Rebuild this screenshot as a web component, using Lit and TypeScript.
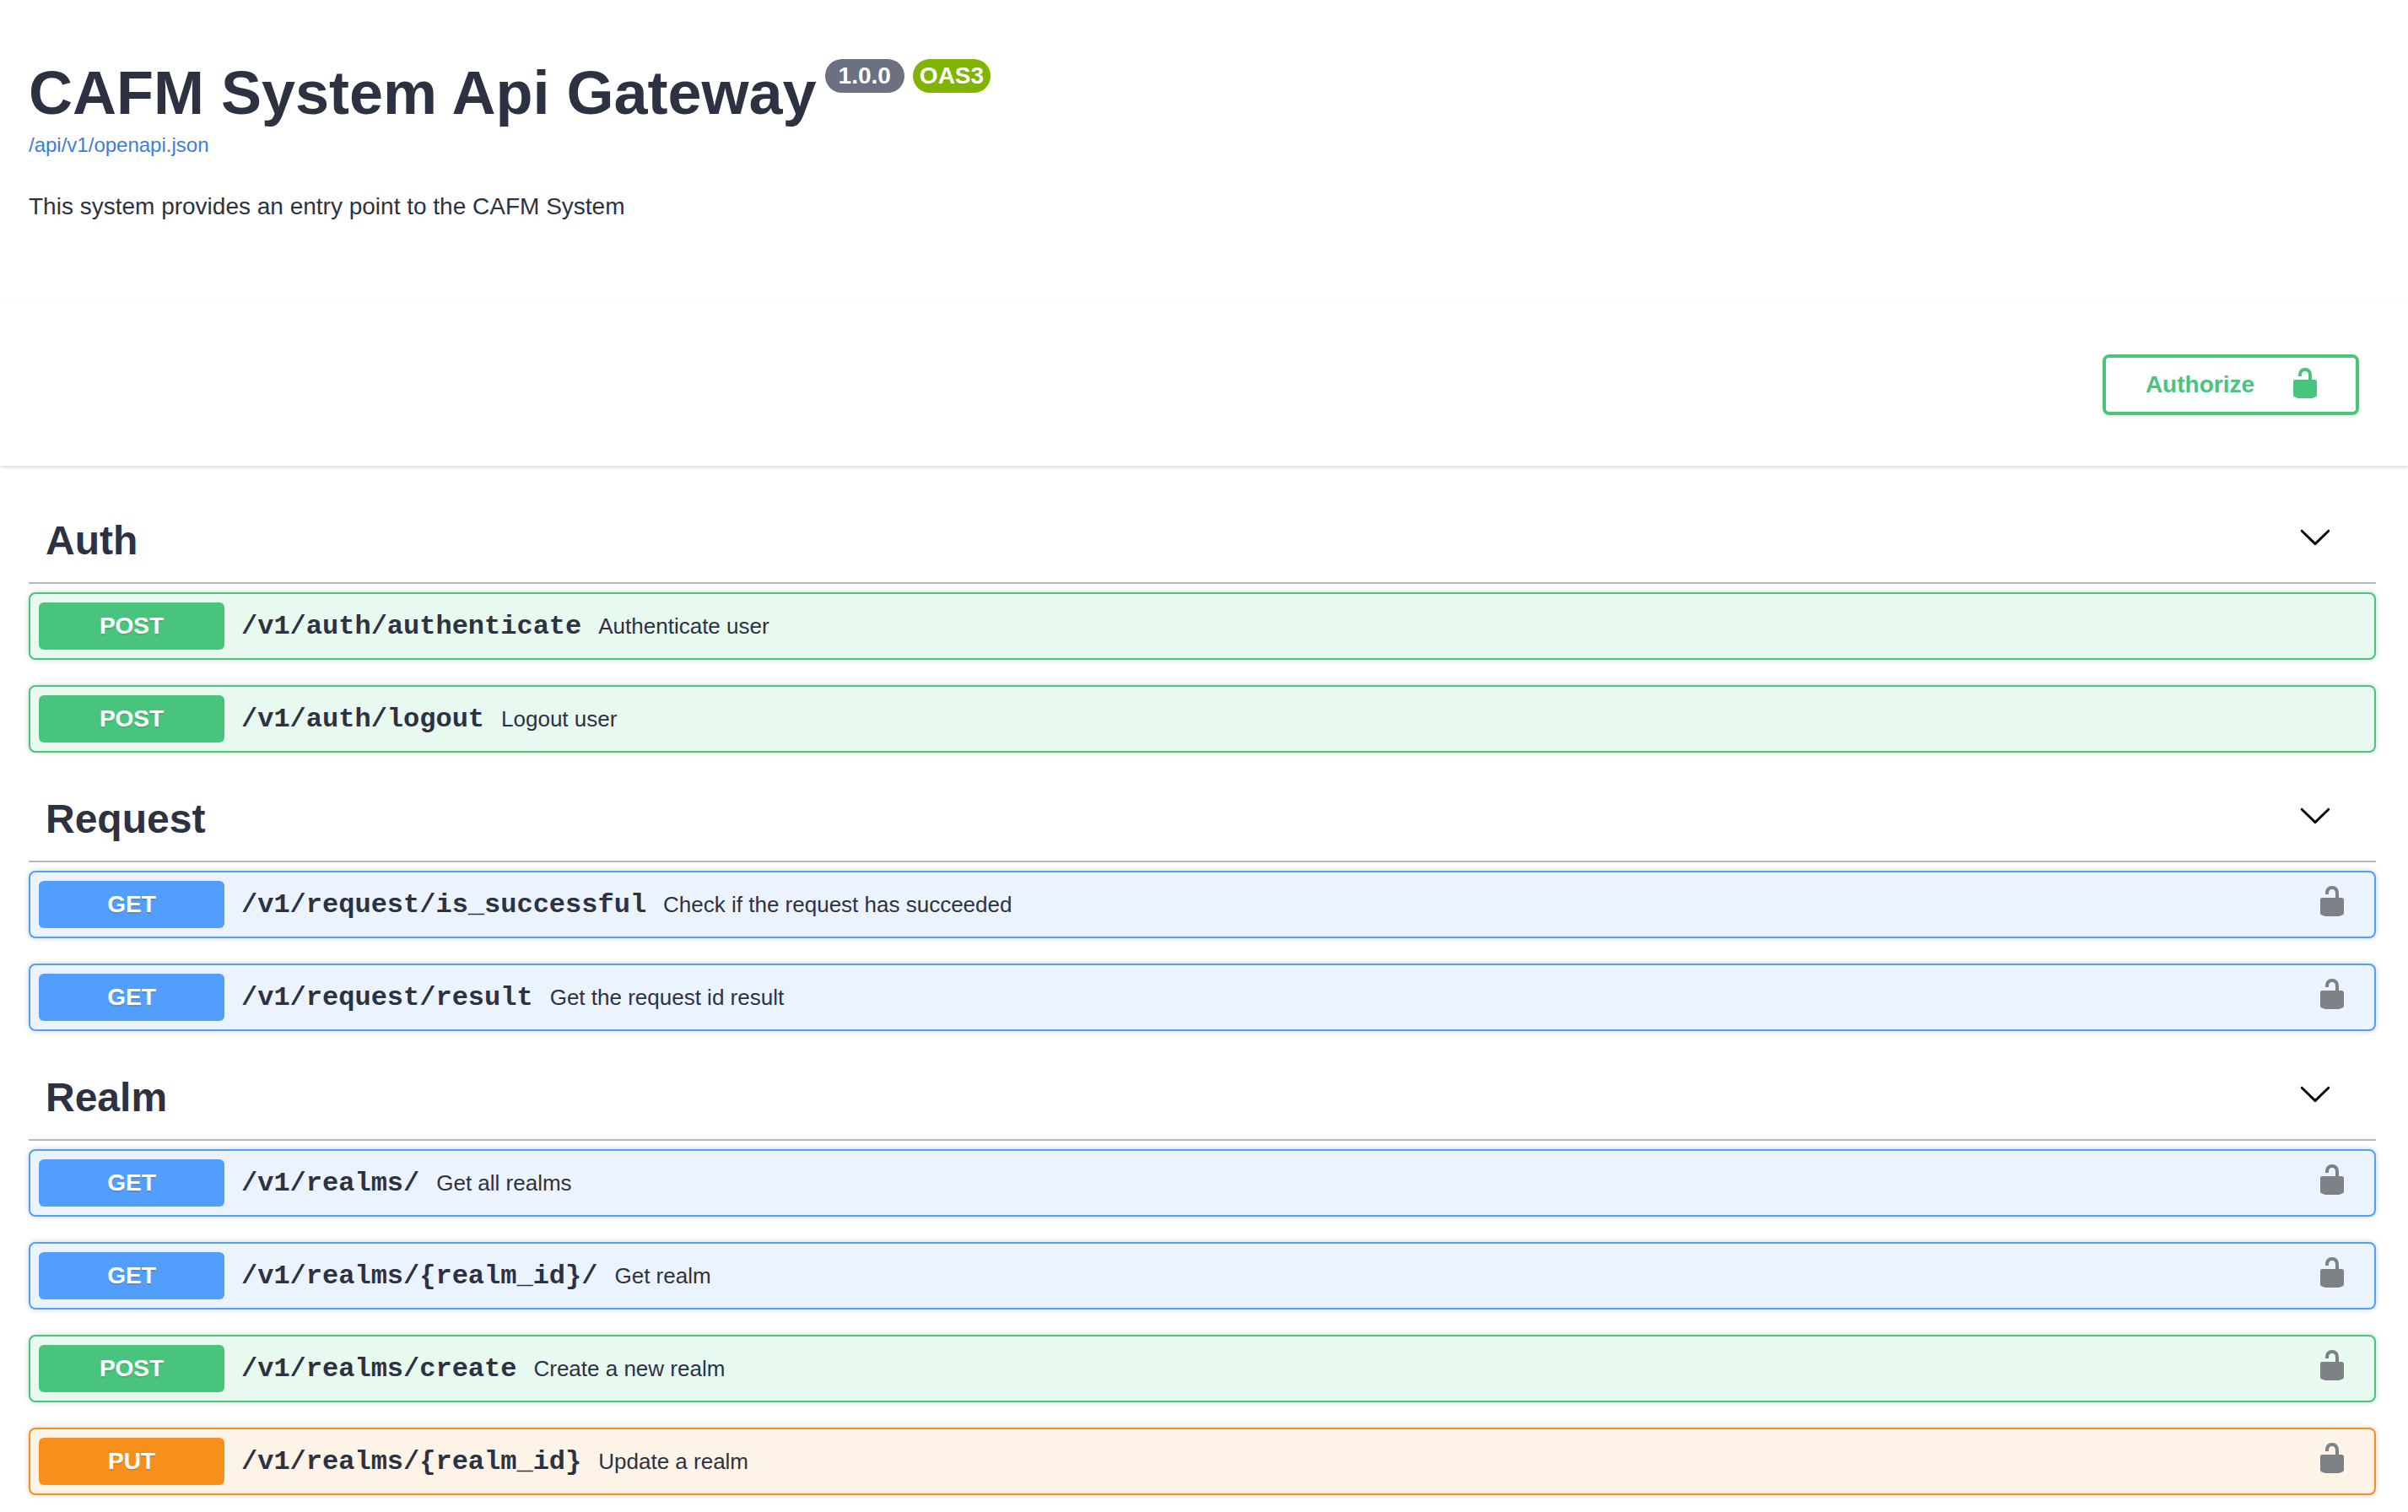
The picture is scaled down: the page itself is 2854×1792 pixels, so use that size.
import { LitElement, html, css, svg, nothing } from "lit";
import { customElement, property } from "lit/decorators.js";

type Method = "get" | "post" | "put";

interface Operation {
  method: Method;
  path: string;
  summary: string;
  secured: boolean;
}

interface Tag {
  name: string;
  operations: Operation[];
}

const tags: Tag[] = [
  {
    name: "Auth",
    operations: [
      { method: "post", path: "/v1/auth/authenticate", summary: "Authenticate user", secured: false },
      { method: "post", path: "/v1/auth/logout", summary: "Logout user", secured: false },
    ],
  },
  {
    name: "Request",
    operations: [
      { method: "get", path: "/v1/request/is_successful", summary: "Check if the request has succeeded", secured: true },
      { method: "get", path: "/v1/request/result", summary: "Get the request id result", secured: true },
    ],
  },
  {
    name: "Realm",
    operations: [
      { method: "get", path: "/v1/realms/", summary: "Get all realms", secured: true },
      { method: "get", path: "/v1/realms/{realm_id}/", summary: "Get realm", secured: true },
      { method: "post", path: "/v1/realms/create", summary: "Create a new realm", secured: true },
      { method: "put", path: "/v1/realms/{realm_id}", summary: "Update a realm", secured: true },
    ],
  },
];

const unlockedPath = svg`<path d="M15.8 8H14V5.6C14 2.703 12.665 1 10 1 7.334 1 6 2.703 6 5.6V6h2v-.801C8 3.754 8.797 3 10 3c1.203 0 2 .754 2 2.199V8H4c-.553 0-1 .646-1 1.199V17c0 .549.428 1.139.951 1.307l1.197.387C5.672 18.861 6.55 19 7.1 19h5.8c.549 0 1.428-.139 1.951-.307l1.196-.387c.524-.167.953-.757.953-1.306V9.199C17 8.646 16.352 8 15.8 8z"></path>`;

const arrowPath = svg`<path d="M17.418 6.109c.272-.268.709-.268.979 0s.271.701 0 .969l-7.908 7.83c-.27.268-.707.268-.979 0l-7.908-7.83c-.27-.268-.27-.701 0-.969.271-.268.709-.268.979 0L10 13.25z"></path>`;

const reset = css`
  *,
  *::before,
  *::after {
    box-sizing: border-box;
  }
  button {
    margin: 0;
    padding: 0;
    border: 0;
    background: none;
    color: inherit;
    font: inherit;
    text-align: left;
    cursor: pointer;
  }
  svg {
    display: block;
    flex: none;
    width: 40px;
    height: 40px;
    fill: currentColor;
  }
`;

@customElement("api-operation")
export class ApiOperation extends LitElement {
  @property({ attribute: false }) operation!: Operation;

  static styles = [
    reset,
    css`
      :host {
        display: block;
      }
      .row {
        display: flex;
        align-items: center;
        padding: 10px;
        border: 2px solid var(--tone);
        border-radius: 8px;
        background: var(--tint);
        box-shadow: 0 0 6px rgba(0, 0, 0, 0.19);
      }
      .get {
        --tone: #529eff;
        --tint: #ebf3ff;
      }
      .post {
        --tone: #49c47c;
        --tint: #e8f9f0;
      }
      .put {
        --tone: #f78f1c;
        --tint: #fdf3e6;
      }
      .summary {
        display: flex;
        flex: 1;
        align-items: center;
        gap: 20px;
        min-width: 0;
      }
      .method {
        width: 220px;
        padding: 12px 0;
        border-radius: 6px;
        background: var(--tone);
        color: #fff;
        font-size: 28px;
        font-weight: 700;
        line-height: 32px;
        text-align: center;
        text-shadow: 0 2px 0 rgba(0, 0, 0, 0.1);
      }
      .path {
        font-family: "Liberation Mono", monospace;
        font-size: 32px;
        font-weight: 700;
      }
      .text {
        font-size: 26px;
      }
      .lock {
        margin-right: 20px;
        padding-bottom: 8px;
        color: #7e8286;
      }
    `,
  ];

  render() {
    const { method, path, summary, secured } = this.operation;
    return html`
      <div class="row ${method}">
        <button class="summary">
          <span class="method">${method.toUpperCase()}</span>
          <span class="path">${path}</span>
          <span class="text">${summary}</span>
        </button>
        ${secured
          ? html`<button class="lock" aria-label="authorization button unlocked">
              <svg viewBox="0 0 20 20" aria-hidden="true">${unlockedPath}</svg>
            </button>`
          : nothing}
      </div>
    `;
  }
}

@customElement("app-root")
export class AppRoot extends LitElement {
  static styles = [
    reset,
    css`
      :host {
        display: block;
        background: #fff;
        color: #2d3242;
        font-family: "Liberation Sans", Arial, sans-serif;
      }
      h1,
      h2,
      p {
        margin: 0;
      }
      .info {
        padding: 66px 38px 96px 34px;
      }
      .heading {
        display: flex;
        align-items: flex-start;
        gap: 10px;
        margin-bottom: 4px;
      }
      .title {
        font-size: 72px;
        font-weight: 700;
        line-height: 88px;
      }
      .badges {
        display: flex;
        gap: 10px;
        padding-top: 4px;
      }
      .badge {
        padding: 4px 16px;
        border-radius: 20px;
        background: #6b7180;
        color: #fff;
        font-size: 28px;
        font-weight: 700;
        line-height: 32px;
      }
      .oas {
        padding: 4px 8px;
        background: #7fb400;
      }
      .link {
        display: inline-block;
        color: #3b7de0;
        font-size: 24px;
        line-height: 28px;
        text-decoration: none;
      }
      .about {
        margin-top: 40px;
        font-size: 28px;
        line-height: 38px;
      }
      .scheme {
        display: flex;
        justify-content: flex-end;
        padding: 60px 58px;
        background: #fff;
        box-shadow: 0 2px 4px rgba(0, 0, 0, 0.15);
      }
      .authorize {
        display: flex;
        align-items: center;
        gap: 40px;
        height: 72px;
        padding: 0 40px 0 47px;
        border: 4px solid #49c47c;
        border-radius: 8px;
        box-shadow: 0 2px 4px rgba(0, 0, 0, 0.1);
        color: #49c47c;
        font-size: 28px;
        font-weight: 700;
      }
      .authorize svg {
        margin-bottom: 4px;
      }
      .tags {
        display: flex;
        flex-direction: column;
        gap: 30px;
        padding: 40px 38px 20px 34px;
      }
      .tag {
        display: flex;
        align-items: center;
        justify-content: space-between;
        height: 100px;
        margin-bottom: 10px;
        padding: 0 52px 0 20px;
        border-bottom: 2px solid #b5b8be;
      }
      .name {
        font-size: 48px;
        font-weight: 700;
        line-height: 56px;
      }
      .toggle {
        padding-bottom: 10px;
        color: #000;
      }
      .operations {
        display: flex;
        flex-direction: column;
        gap: 30px;
      }
    `,
  ];

  render() {
    return html`
      <header class="info">
        <div class="heading">
          <h1 class="title">CAFM System Api Gateway</h1>
          <div class="badges">
            <span class="badge">1.0.0</span>
            <span class="badge oas">OAS3</span>
          </div>
        </div>
        <a class="link" href="/api/v1/openapi.json">/api/v1/openapi.json</a>
        <p class="about">This system provides an entry point to the CAFM System</p>
      </header>
      <section class="scheme">
        <button class="authorize">
          <span>Authorize</span>
          <svg viewBox="0 0 20 20" aria-hidden="true">${unlockedPath}</svg>
        </button>
      </section>
      <main class="tags">
        ${tags.map(
          (tag) => html`
            <section>
              <div class="tag">
                <h2 class="name">${tag.name}</h2>
                <button class="toggle" aria-label="Collapse ${tag.name}" aria-expanded="true">
                  <svg viewBox="0 0 20 20" aria-hidden="true">${arrowPath}</svg>
                </button>
              </div>
              <div class="operations">
                ${tag.operations.map((operation) => html`<api-operation .operation=${operation}></api-operation>`)}
              </div>
            </section>
          `,
        )}
      </main>
    `;
  }
}
